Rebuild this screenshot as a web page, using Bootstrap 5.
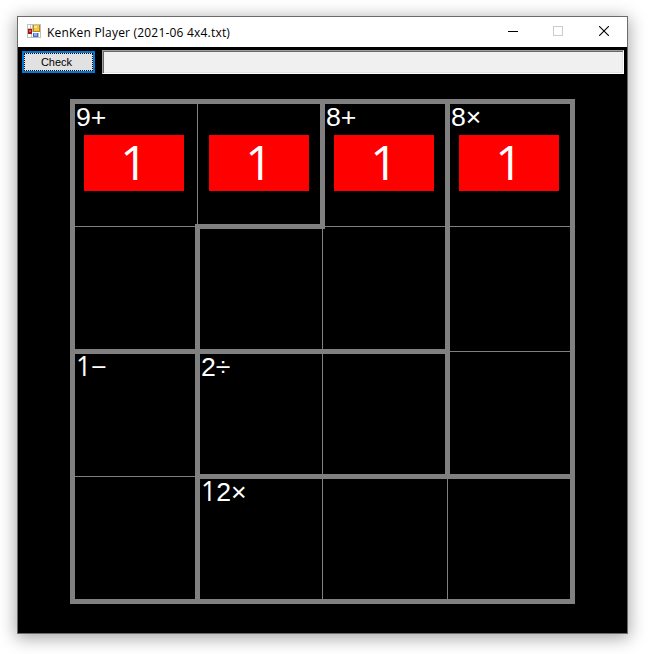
<!DOCTYPE html>
<html lang="en">
<head>
<meta charset="utf-8">
<meta name="viewport" content="width=device-width, initial-scale=1">
<title>KenKen Player</title>
<link href="https://cdn.jsdelivr.net/npm/bootstrap@5.3.0/dist/css/bootstrap.min.css" rel="stylesheet">
<style>
body { background: #fff; padding: 16px 0 0 17px; font-family: "Liberation Sans", Arial, sans-serif; }
.app-window { width: 611px; height: 618px; border: 1px solid #6b6b6b; background: #000; box-shadow: 0 3px 16px 1px rgba(0,0,0,.36); }
.title-bar { height: 30px; padding-left: 9px; background: #fff; }
.app-icon { margin-bottom: 2px; }
.title-text { margin-left: 6px; padding-top: 1px; font: 12px/30px "Open Sans", "Segoe UI", sans-serif; letter-spacing: .2px; color: #000; white-space: nowrap; }
.win-btn { width: 46px; height: 28px; }
.win-btn-min { width: 44px; }
.tool-row { padding: 4px 3px 0 4px; height: 28px; }
.check-btn { width: 73px; height: 22px; border: 2px solid #0078d7; border-radius: 0; background: #e1e1e1; color: #000; font-size: 11px; line-height: 18px; padding: 0 4px 0 0; outline: 1px dotted #000; outline-offset: -3px; }
.status-box { height: 24px; margin-left: 7px; margin-top: -1px; background: #f0f0f0; border: 1px solid; border-color: #a0a0a0 #fff #fff #a0a0a0; box-shadow: inset 1px 1px #696969, inset -1px -1px #e3e3e3; }
.board { width: 505px; height: 505px; margin: 24px 0 0 52px; border: 5px solid #808080; }
.board-grid { display: grid; grid-template: repeat(4, 125px) / repeat(4, 125px); margin: -3px; width: 500px; }
.cell { position: relative; border: 0 solid #808080; border-width: 1px 0 0 1px; color: #fff; }
.wall-left::before, .wall-top::after { content: ""; position: absolute; background: #808080; }
.wall-left::before { left: -3px; top: -3px; width: 5px; height: 130px; }
.wall-top::after { left: -3px; top: -3px; width: 130px; height: 5px; }
.clue { height: 33px; padding: 0 0 0 3px; font-size: 26.67px; line-height: 31px; white-space: nowrap; }
.clue .plain-one { line-height: 1; }
.entry { width: 100px; height: 56px; margin-left: 11px; background: #f00; font-size: 48px; line-height: 53px; }
.plain-one { font-family: "Open Sans", sans-serif; }
</style>
<script src="https://cdn.jsdelivr.net/npm/bootstrap@5.3.0/dist/js/bootstrap.bundle.min.js"></script>
</head>
<body class="vh-100 overflow-hidden">
<main class="app-window">
  <header class="title-bar d-flex align-items-center">
    <svg width="14" height="14" viewBox="0 0 14 14" shape-rendering="crispEdges" class="app-icon flex-shrink-0">
      <path fill="#c0c0c0" d="M0 0h14v14H0z"/>
      <path fill="#fff" d="M1 1h2v3H1zM4 1h1v3H4zM1 10h3v3H1zM5 9h1v4H5zM12 9h1v4h-1z"/>
      <path fill="#a51510" d="M1 5h4v5H1z"/><path fill="#e8564a" d="M2 6h2v2H2z"/>
      <path fill="#b98a16" d="M6 1h7v7H6z"/><path fill="#f5c63c" d="M7 1h5v6H7z"/><path fill="#ffe88c" d="M7 2h3v2H7z"/>
      <path fill="#fff" d="M5 8h8v1H5z"/>
      <path fill="#3d6fd0" d="M6 9h5v4H6z"/><path fill="#7dabf5" d="M7 9h3v3H7z"/>
    </svg>
    <span class="title-text">KenKen Player (2021-06 4x4.txt)</span>
    <div class="d-flex ms-auto align-self-start">
      <span class="win-btn win-btn-min d-flex align-items-center justify-content-center"><svg width="10" height="10" shape-rendering="crispEdges"><path fill="#000" d="M0 5h10v1H0z"/></svg></span>
      <span class="win-btn d-flex align-items-center justify-content-center"><svg width="10" height="10" shape-rendering="crispEdges"><path fill="none" stroke="#ccc" d="M.5.5h9v9h-9z"/></svg></span>
      <span class="win-btn d-flex align-items-center justify-content-center"><svg width="10" height="10"><path stroke="#000" stroke-width="1.1" d="M0 0l10 10M10 0L0 10"/></svg></span>
    </div>
  </header>
  <div class="tool-row d-flex">
    <button type="button" class="btn check-btn flex-shrink-0">Check</button>
    <div class="status-box flex-grow-1"></div>
  </div>
  <section class="board">
    <div class="board-grid">
      <div class="cell"><div class="clue">9+</div><div class="entry plain-one text-center">1</div></div>
      <div class="cell"><div class="clue"></div><div class="entry plain-one text-center">1</div></div>
      <div class="cell wall-left"><div class="clue">8+</div><div class="entry plain-one text-center">1</div></div>
      <div class="cell wall-left"><div class="clue">8×</div><div class="entry plain-one text-center">1</div></div>
      <div class="cell"></div>
      <div class="cell wall-left wall-top"></div>
      <div class="cell"></div>
      <div class="cell wall-left"></div>
      <div class="cell wall-top"><div class="clue"><span class="plain-one">1</span>−</div></div>
      <div class="cell wall-left wall-top"><div class="clue">2÷</div></div>
      <div class="cell wall-top"></div>
      <div class="cell wall-left"></div>
      <div class="cell"></div>
      <div class="cell wall-left wall-top"><div class="clue"><span class="plain-one">1</span>2×</div></div>
      <div class="cell wall-top"></div>
      <div class="cell wall-top"></div>
    </div>
  </section>
</main>
</body>
</html>
